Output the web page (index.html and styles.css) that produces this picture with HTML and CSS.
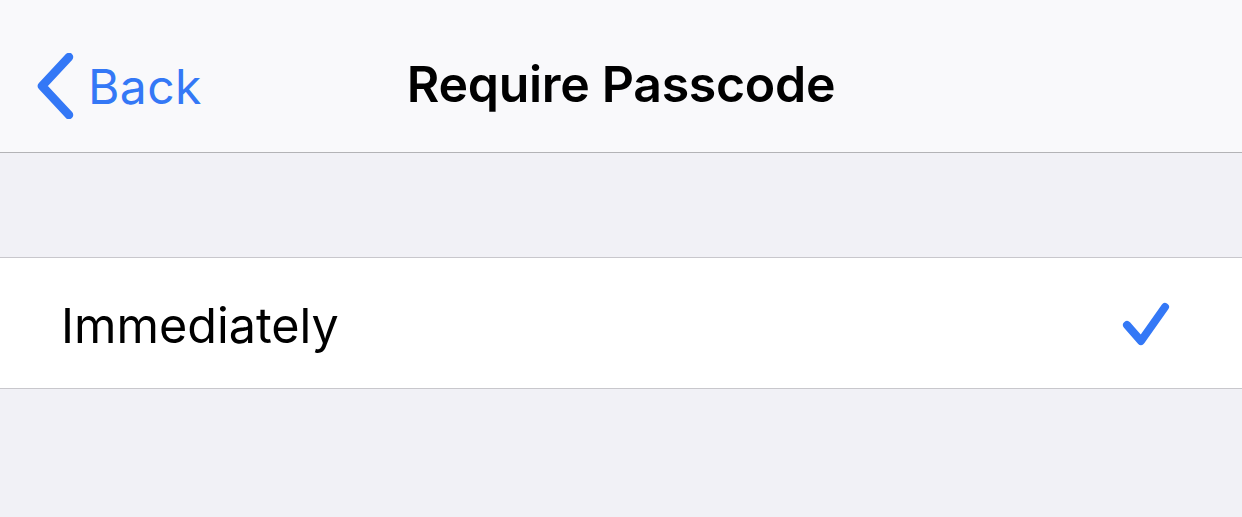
FILE: index.html
```html
<!DOCTYPE html>
<html lang="en">
<head>
    <meta charset="UTF-8">
    <meta name="viewport" content="width=device-width, initial-scale=1.0">
    <title>Require Passcode</title>
    <link rel="stylesheet" href="styles.css">
</head>
<body>
    <div class="navbar">
        <a class="back" href="#">
            <svg class="chevron" width="40" height="66" viewBox="0 0 40 66">
                <path d="M33 4 L6 33 L33 62" fill="none" stroke="currentColor" stroke-width="8.5" stroke-linecap="round" stroke-linejoin="round"/>
            </svg>
            <span>Back</span>
        </a>
        <div class="title">Require Passcode</div>
    </div>

    <div class="spacer"></div>

    <div class="list">
        <div class="row">
            <span class="label">Immediately</span>
            <svg class="check" width="52" height="50" viewBox="0 0 52 50">
                <path d="M7 25 L21 41 L45 7" fill="none" stroke="currentColor" stroke-width="8" stroke-linecap="round" stroke-linejoin="round"/>
            </svg>
        </div>
    </div>
</body>
</html>
```

FILE: styles.css
```css
* {
    margin: 0;
    padding: 0;
    box-sizing: border-box;
    font-family: Inter, "Noto Sans", sans-serif;
}

body {
    min-height: 100vh;
    background: #f1f1f6;
}

.navbar {
    height: 153px;
    background: #f9f9fb;
    border-bottom: 1px solid #b3b3b6;
    display: flex;
    align-items: center;
    justify-content: center;
    position: relative;
}

.back {
    position: absolute;
    left: 36px;
    top: 53px;
    display: flex;
    align-items: center;
    gap: 12px;
    color: #3478f6;
    text-decoration: none;
    font-size: 48px;
}

.back span {
    font-weight: 400;
    letter-spacing: 0.4px;
}

.title {
    font-size: 50px;
    font-weight: 600;
    color: #000;
    letter-spacing: -0.3px;
    padding-top: 16px;
}

.spacer {
    height: 104px;
}

.list {
    background: #fff;
    border-top: 1px solid #c8c7cc;
    border-bottom: 1px solid #c8c7cc;
}

.row {
    height: 130px;
    display: flex;
    align-items: center;
    justify-content: space-between;
    padding: 4px 70px 0 61px;
}

.label {
    font-size: 48.5px;
    color: #000;
}

.check {
    color: #3478f6;
}
```
